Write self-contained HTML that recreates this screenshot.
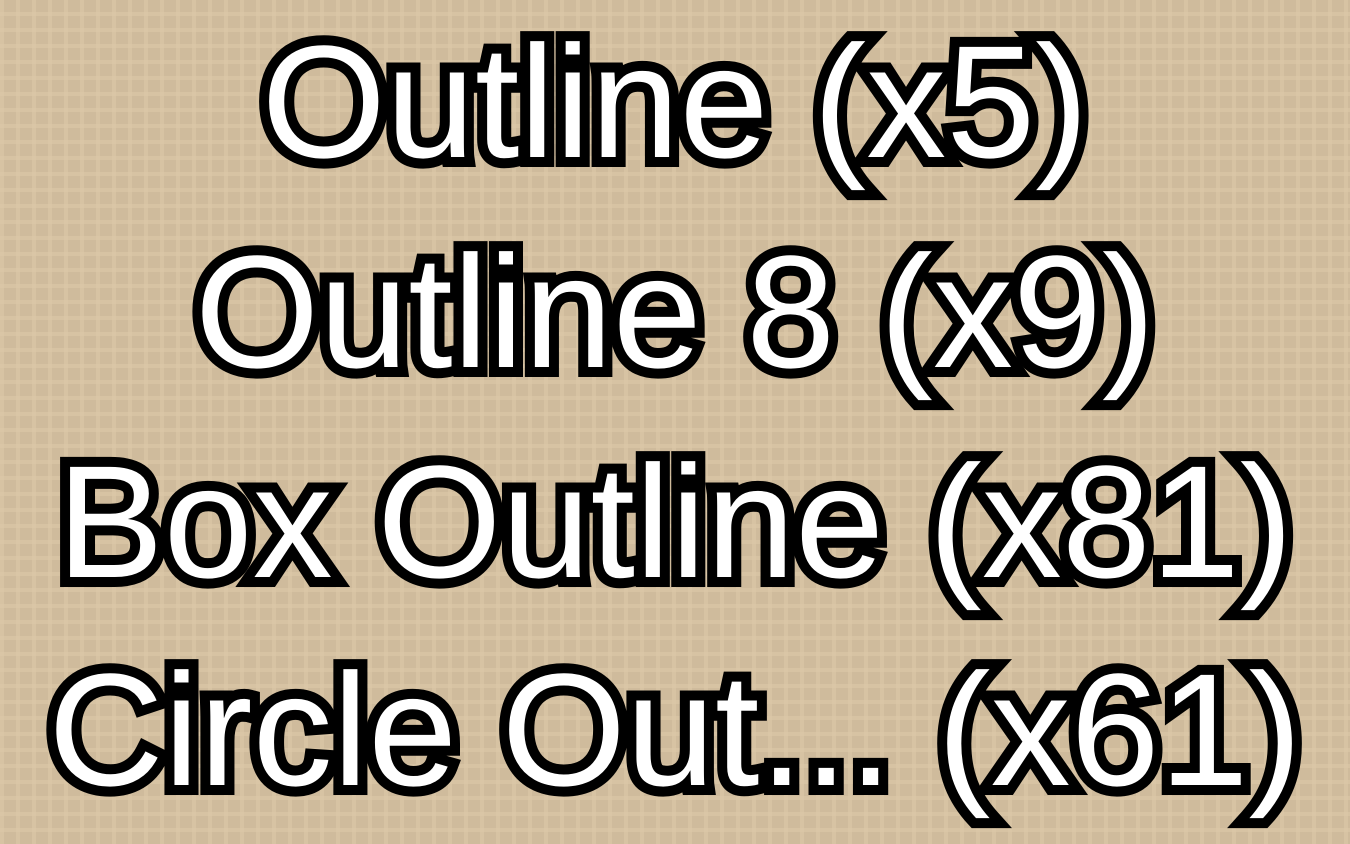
<!DOCTYPE html>
<html><head><meta charset="utf-8"><style>
html,body{margin:0;width:1350px;height:844px;overflow:hidden}
body{background-color:#cfbb9c;background-image:linear-gradient(90deg,rgba(220,200,168,.6) 4px,transparent 4px),linear-gradient(0deg,rgba(220,200,168,.6) 4px,transparent 4px);background-size:16px 16px;position:relative}
.l{position:absolute;left:0;width:1350px;text-align:center;font-family:"Liberation Sans",Arial,sans-serif;font-size:160px;line-height:1;color:#fff;-webkit-text-stroke:20px #000;paint-order:stroke fill;white-space:nowrap;text-shadow:4px 6px 0 #000}
</style></head><body>
<div class="l" style="top:22px">Outline (x5)</div>
<div class="l" style="top:232px">Outline 8 (x9)</div>
<div class="l" style="top:442px">Box Outline (x81)</div>
<div class="l" style="top:650px">Circle Out... (x61)</div>
</body></html>
